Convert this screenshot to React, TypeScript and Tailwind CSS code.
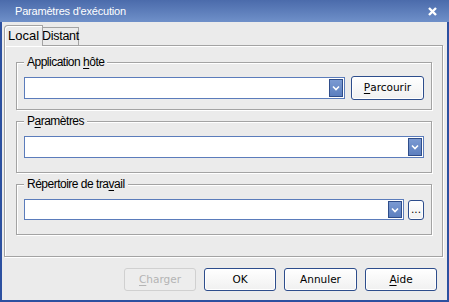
import React from "react";

const sans = "font-['Liberation_Sans',Arial,sans-serif]";
const btnFont = "font-['DejaVu_Sans',Verdana,sans-serif]";

function Mnemonic({ text, at }: { text: string; at: number }) {
  return (
    <>
      {text.slice(0, at)}
      <span className="underline underline-offset-[2px]">{text[at]}</span>
      {text.slice(at + 1)}
    </>
  );
}

function Combo({ className }: { className: string }) {
  return (
    <div className={`relative h-[22px] border border-[#5b7cbb] bg-white ${className}`}>
      <div className="absolute right-[1px] top-[1px] bottom-[1px] w-[14px] flex items-center justify-center border border-[#2f4d8a] bg-gradient-to-b from-[#7b9ad2] to-[#5c7fbf]">
        <svg width="8" height="6" viewBox="0 0 8 6">
          <path d="M1 1.5 L4 4.5 L7 1.5" stroke="#fff" strokeWidth="1.6" fill="none" />
        </svg>
      </div>
    </div>
  );
}

function Button({
  children,
  disabled,
  className = "",
}: {
  children: React.ReactNode;
  disabled?: boolean;
  className?: string;
}) {
  return (
    <div
      className={`flex items-center justify-center rounded-[3px] border text-[10.5px] ${btnFont} ${
        disabled
          ? "border-[#d0d0d0] bg-[#ededed] text-[#b4b4b4]"
          : "border-[#2d4d8c] bg-gradient-to-b from-white to-[#f0f0f0] text-black shadow-[inset_0_0_0_1px_#fff]"
      } ${className}`}
    >
      {children}
    </div>
  );
}

function Group({
  label,
  className,
  children,
}: {
  label: React.ReactNode;
  className: string;
  children: React.ReactNode;
}) {
  return (
    <div
      className={`relative border border-[#a3a3a3] shadow-[inset_1px_1px_0_#fff,1px_1px_0_#fff] pl-[7px] pr-[7px] ${className}`}
    >
      <span
        className={`absolute left-[7px] -top-[8px] bg-[#ebebeb] px-[3px] text-[12px] leading-[14px] tracking-[-0.5px] text-black ${sans}`}
      >
        {label}
      </span>
      {children}
    </div>
  );
}

export default function App() {
  return (
    <div className="w-[449px] h-[302px] flex flex-col bg-[#2c50a0]">
      {/* barre de titre */}
      <div className="h-[22px] flex items-center justify-between pl-[15px] pr-[12px] bg-gradient-to-b from-[#4b6bab] to-[#6f90c9]">
        <span className={`text-white text-[11px] tracking-[-0.2px] ${sans}`}>Paramètres d'exécution</span>
        <svg width="9" height="9" viewBox="0 0 9 9">
          <path d="M1 1 L8 8 M8 1 L1 8" stroke="#fff" strokeWidth="2.4" />
        </svg>
      </div>

      <div className="flex-1 mx-[2px] mb-[2px] bg-[#ebebeb] flex flex-col">
        {/* onglets */}
        <div className="flex items-end h-[23px] pl-[2px] pt-[3px]">
          <div
            className={`relative z-10 h-[21px] w-[39px] -mb-[1px] flex items-center justify-center rounded-tl-[4px] border border-b-0 border-[#a3a3a3] bg-[#ebebeb] shadow-[inset_1px_1px_0_#fff] text-[13px] text-black ${sans}`}
          >
            Local
          </div>
          <div
            className={`h-[18px] w-[36px] flex items-center justify-center border border-l-0 border-b-0 border-[#a3a3a3] bg-[#ebebeb] text-[12.5px] tracking-[-0.3px] text-black ${sans}`}
          >
            Distant
          </div>
        </div>

        {/* panneau */}
        <div className="ml-[2px] mr-[4px] h-[212px] border border-[#a3a3a3] shadow-[inset_1px_1px_0_#fff,1px_1px_0_#fff] pt-[16px] pl-[11px] pr-[10px] flex flex-col gap-[11px]">
          <Group label={<Mnemonic text="Application hôte" at={12} />} className="h-[48px] pt-[13px]">
            <div className="flex items-center gap-[6px]">
              <Combo className="flex-1" />
              <Button className="w-[73px] h-[24px]">
                <Mnemonic text="Parcourir" at={0} />
              </Button>
            </div>
          </Group>
          <Group label={<Mnemonic text="Paramètres" at={1} />} className="h-[52px] pt-[14px]">
            <Combo className="w-full" />
          </Group>
          <Group label={<Mnemonic text="Répertoire de travail" at={17} />} className="h-[51px] pt-[14px]">
            <div className="flex items-center gap-[4px]">
              <Combo className="flex-1 !h-[21px]" />
              <Button className="w-[16px] h-[20px]">...</Button>
            </div>
          </Group>
        </div>

        {/* boutons */}
        <div className="flex justify-end gap-[8px] pt-[11px] pr-[10px]">
          <Button disabled className="w-[72px] h-[23px]">
            <Mnemonic text="Charger" at={0} />
          </Button>
          <Button className="w-[72px] h-[23px]">OK</Button>
          <Button className="w-[73px] h-[23px]">Annuler</Button>
          <Button className="w-[72px] h-[23px]">
            <Mnemonic text="Aide" at={0} />
          </Button>
        </div>
      </div>
    </div>
  );
}
